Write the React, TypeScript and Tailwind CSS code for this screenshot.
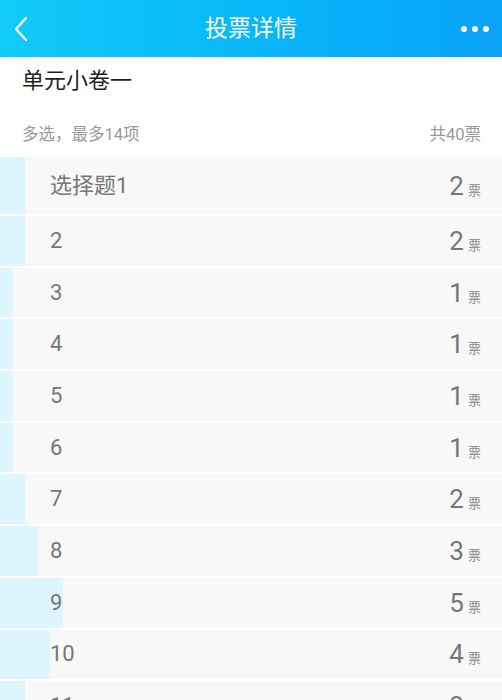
import React from "react";

const rows: { label: string; votes: number }[] = [
  { label: "选择题1", votes: 2 },
  { label: "2", votes: 2 },
  { label: "3", votes: 1 },
  { label: "4", votes: 1 },
  { label: "5", votes: 1 },
  { label: "6", votes: 1 },
  { label: "7", votes: 2 },
  { label: "8", votes: 3 },
  { label: "9", votes: 5 },
  { label: "10", votes: 4 },
  { label: "11", votes: 2 },
];

const TOTAL = 40;

export default function App() {
  return (
    <div
      className="w-[502px] h-[700px] overflow-hidden bg-white"
      style={{ fontFamily: 'Roboto, "Noto Sans CJK SC", sans-serif' }}
    >
      <div className="h-[57px] bg-gradient-to-r from-[#12cbf7] to-[#0aa2f9] flex items-center justify-between relative">
        <div className="pl-[13px] flex items-center">
          <svg width="16" height="28" viewBox="0 0 16 28" fill="none">
            <path d="M13 3 L3 14 L13 25" stroke="white" strokeWidth="2.3" strokeLinecap="round" strokeLinejoin="round" />
          </svg>
        </div>
        <div className="absolute left-0 right-0 text-center text-white text-[23px] leading-[30px] pointer-events-none">
          投票详情
        </div>
        <div className="pr-[13px] flex items-center gap-[5px]">
          <span className="w-[6px] h-[6px] rounded-full bg-white" />
          <span className="w-[6px] h-[6px] rounded-full bg-white" />
          <span className="w-[6px] h-[6px] rounded-full bg-white" />
        </div>
      </div>

      <div className="h-[100px] px-[22px] pt-[11px]">
        <div className="text-[22px] leading-[26px] text-[#1f1f1f]">单元小卷一</div>
        <div className="mt-[31px] flex justify-between text-[16.5px] leading-[20px] text-[#9a9a9a]">
          <span>多选，最多14项</span>
          <span className="mr-[-1px]">共40票</span>
        </div>
      </div>

      <div className="flex flex-col gap-[2px]">
        {rows.map((r, i) => (
          <div
            key={i}
            className={`relative bg-[#f8f8f8] flex items-center justify-between ${i === 0 ? "h-[57px]" : "h-[49.7px]"}`}
          >
            <div
              className="absolute left-0 top-0 bottom-0 bg-[#dcf5fe]"
              style={{ width: `${(r.votes / TOTAL) * 100}%` }}
            />
            <span className="relative pl-[50px] text-[22px] text-[#777] leading-none">{r.label}</span>
            <span className="relative pr-[21px] flex items-baseline text-[#777]">
              <span className="text-[26px] leading-none">{r.votes}</span>
              <span className="text-[13px] leading-none ml-[4px] text-[#888]">票</span>
            </span>
          </div>
        ))}
      </div>
    </div>
  );
}
